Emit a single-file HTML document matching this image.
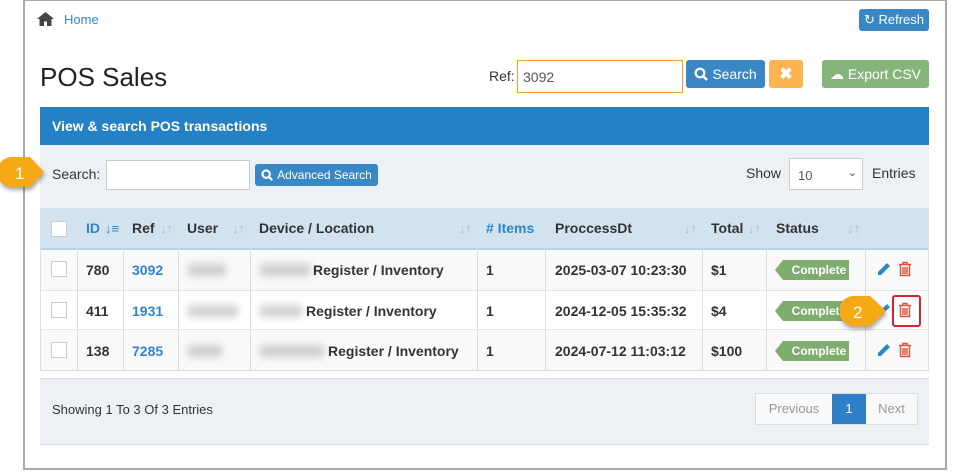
<!DOCTYPE html>
<html><head><style>
*{box-sizing:border-box;margin:0;padding:0}
body{width:953px;height:472px;background:#fff;font-family:"Liberation Sans",sans-serif;position:relative;overflow:hidden;color:#333}
.frame{position:absolute;left:23px;top:0;width:924px;height:470px;border:2px solid #a9a9a9;border-top:1px solid #a9a9a9}
.abs{position:absolute}
.btn{position:absolute;color:#fff;border-radius:3px;font-size:13px;display:flex;align-items:center;justify-content:center;gap:4px}
.th,.td{position:absolute;font-weight:bold;font-size:14px;display:flex;align-items:center}
.blur{position:absolute;background:#999;filter:blur(4px);opacity:.45;height:12px}
.badge{position:absolute;background:#7ead6f;color:#fff;font-size:12px;font-weight:bold;width:66px;height:20px;line-height:20px;text-align:center;padding-left:6px}
.badge:before{content:"";position:absolute;left:-8px;top:0;border-right:8px solid #7ead6f;border-top:10px solid transparent;border-bottom:10px solid transparent}
.cb{position:absolute;width:16px;height:16px;border:1px solid #ccc;background:#fff;left:51px}
.sort{color:#bbb;font-size:13px;position:absolute}
</style></head><body>
<div class="frame"></div>
<svg class="abs" style="left:37px;top:12px" width="17" height="14" viewBox="0 0 17 14"><path d="M8.5 0L0 7h2.5v7h4.5v-4.5h3V14h4.5V7H17z" fill="#444"/></svg>
<div class="abs" style="left:64px;top:12px;font-size:13px;color:#3a87c5">Home</div>
<div class="btn" style="left:859px;top:9px;width:70px;height:22px;background:#3a87c5">&#8635; Refresh</div>
<div class="abs" style="left:40px;top:62px;font-size:26px;color:#222">POS Sales</div>
<div class="abs" style="left:489px;top:68px;font-size:14px">Ref:</div>
<div class="abs" style="left:517px;top:60px;width:166px;height:33px;border:1px solid #f39a3e;font-size:14px;padding:8px 5px;color:#555">3092</div>
<div class="btn" style="left:686px;top:60px;width:79px;height:28px;background:#3a87c5;font-size:14px"><svg width="14" height="14" viewBox="0 0 14 14"><circle cx="6" cy="6" r="4.3" stroke="#fff" stroke-width="2.2" fill="none"/><path d="M9 9l4 4" stroke="#fff" stroke-width="2.5"/></svg>Search</div>
<div class="btn" style="left:769px;top:60px;width:34px;height:28px;background:#fbb450;font-size:16px;font-weight:bold">✖</div>
<div class="btn" style="left:822px;top:60px;width:107px;height:28px;background:#86b57c;font-size:14px">☁ Export CSV</div>
<div class="abs" style="left:40px;top:107px;width:889px;height:38px;background:#2481c6;color:#fff;font-weight:bold;font-size:14px;padding:11px 12px">View &amp; search POS transactions</div>
<div class="abs" style="left:40px;top:145px;width:889px;height:63px;background:#edf1f5"></div>
<div class="abs" style="left:52px;top:166px;font-size:14px">Search:</div>
<div class="abs" style="left:106px;top:160px;width:144px;height:30px;border:1px solid #ccc;background:#fff"></div>
<div class="btn" style="left:255px;top:164px;width:123px;height:22px;background:#3a87c5;font-size:12px"><svg width="12" height="12" viewBox="0 0 14 14"><circle cx="6" cy="6" r="4.3" stroke="#fff" stroke-width="2.4" fill="none"/><path d="M9 9l4 4" stroke="#fff" stroke-width="2.6"/></svg>Advanced Search</div>
<div class="abs" style="left:746px;top:165px;font-size:14px">Show</div>
<div class="abs" style="left:789px;top:158px;width:74px;height:32px;border:1px solid #ccc;background:#fff;font-size:13px;color:#555;padding:9px 8px">10<span style="position:absolute;right:5px;top:7px;font-size:11px">&#8964;</span></div>
<div class="abs" style="left:872px;top:165px;font-size:14px">Entries</div>
<div class="abs" style="left:40px;top:208px;width:889px;height:42px;background:#d0e3ef;border-bottom:2px solid #b9d3e6"></div>
<div class="abs" style="left:40px;top:250px;width:889px;height:40px;background:#f9f9f9"></div>
<div class="abs" style="left:40px;top:290px;width:889px;height:40px;background:#fff;border-top:1px solid #e4e4e4;border-bottom:1px solid #e4e4e4"></div>
<div class="abs" style="left:40px;top:330px;width:889px;height:41px;background:#f9f9f9;border-bottom:1px solid #ddd"></div>
<div class="abs" style="left:40px;top:208px;width:889px;height:163px;border-left:1px solid #ddd;border-right:1px solid #ddd"></div>
<div class="abs" style="left:77px;top:208px;width:1px;height:163px;background:#ddd"></div>
<div class="abs" style="left:123px;top:208px;width:1px;height:163px;background:#ddd"></div>
<div class="abs" style="left:178px;top:208px;width:1px;height:163px;background:#ddd"></div>
<div class="abs" style="left:250px;top:208px;width:1px;height:163px;background:#ddd"></div>
<div class="abs" style="left:477px;top:208px;width:1px;height:163px;background:#ddd"></div>
<div class="abs" style="left:545px;top:208px;width:1px;height:163px;background:#ddd"></div>
<div class="abs" style="left:702px;top:208px;width:1px;height:163px;background:#ddd"></div>
<div class="abs" style="left:766px;top:208px;width:1px;height:163px;background:#ddd"></div>
<div class="abs" style="left:865px;top:208px;width:1px;height:163px;background:#ddd"></div>
<div class="cb" style="top:221px"></div>
<div class="th" style="left:86px;top:220px;color:#2e86c8">ID <span style="font-size:13px;margin-left:5px">↓≡</span></div>
<div class="th" style="left:132px;top:220px">Ref</div><span class="sort" style="left:160px;top:221px">↓↑</span>
<div class="th" style="left:187px;top:220px">User</div><span class="sort" style="left:232px;top:221px">↓↑</span>
<div class="th" style="left:259px;top:220px">Device / Location</div><span class="sort" style="left:459px;top:221px">↓↑</span>
<div class="th" style="left:486px;top:220px;color:#2e86c8">#&nbsp;Items</div>
<div class="th" style="left:555px;top:220px">ProccessDt</div><span class="sort" style="left:684px;top:221px">↓↑</span>
<div class="th" style="left:711px;top:220px">Total</div><span class="sort" style="left:748px;top:221px">↓↑</span>
<div class="th" style="left:776px;top:220px">Status</div><span class="sort" style="left:847px;top:221px">↓↑</span>
<div class="cb" style="top:261px"></div><div class="cb" style="top:302px"></div><div class="cb" style="top:342px"></div>
<div class="td" style="left:86px;top:262px">780</div><div class="td" style="left:132px;top:262px;color:#2e86c8">3092</div>
<div class="td" style="left:86px;top:303px">411</div><div class="td" style="left:132px;top:303px;color:#2e86c8">1931</div>
<div class="td" style="left:86px;top:343px">138</div><div class="td" style="left:132px;top:343px;color:#2e86c8">7285</div>
<div class="blur" style="left:188px;top:264px;width:38px"></div>
<div class="blur" style="left:188px;top:305px;width:50px"></div>
<div class="blur" style="left:188px;top:345px;width:34px"></div>
<div class="blur" style="left:260px;top:264px;width:50px"></div>
<div class="blur" style="left:260px;top:305px;width:42px"></div>
<div class="blur" style="left:260px;top:345px;width:64px"></div>
<div class="td" style="left:313px;top:262px">Register / Inventory</div>
<div class="td" style="left:306px;top:303px">Register / Inventory</div>
<div class="td" style="left:328px;top:343px">Register / Inventory</div>
<div class="td" style="left:486px;top:262px">1</div><div class="td" style="left:486px;top:303px">1</div><div class="td" style="left:486px;top:343px">1</div>
<div class="td" style="left:555px;top:262px">2025-03-07 10:23:30</div>
<div class="td" style="left:555px;top:303px">2024-12-05 15:35:32</div>
<div class="td" style="left:555px;top:343px">2024-07-12 11:03:12</div>
<div class="td" style="left:711px;top:262px">$1</div><div class="td" style="left:711px;top:303px">$4</div><div class="td" style="left:711px;top:343px">$100</div>
<div class="badge" style="left:783px;top:260px">Complete</div>
<div class="badge" style="left:783px;top:301px">Complete</div>
<div class="badge" style="left:783px;top:341px">Complete</div>
<svg class="abs" style="left:876px;top:261px" width="16" height="16" viewBox="0 0 16 16"><path d="M2 11L11 2l3 3-9 9H2z" fill="#2e86c8"/></svg>
<svg class="abs" style="left:876px;top:302px" width="16" height="16" viewBox="0 0 16 16"><path d="M2 11L11 2l3 3-9 9H2z" fill="#2e86c8"/></svg>
<svg class="abs" style="left:876px;top:342px" width="16" height="16" viewBox="0 0 16 16"><path d="M2 11L11 2l3 3-9 9H2z" fill="#2e86c8"/></svg>
<svg class="abs" style="left:898px;top:261px" width="14" height="16" viewBox="0 0 14 16"><path d="M1 3.5h12M5 3V1.5h4V3M2.5 4v10.5h9V4M5 6v7M7 6v7M9 6v7" stroke="#e74c3c" stroke-width="1.4" fill="none"/></svg>
<svg class="abs" style="left:898px;top:302px" width="14" height="16" viewBox="0 0 14 16"><path d="M1 3.5h12M5 3V1.5h4V3M2.5 4v10.5h9V4M5 6v7M7 6v7M9 6v7" stroke="#e74c3c" stroke-width="1.4" fill="none"/></svg>
<svg class="abs" style="left:898px;top:342px" width="14" height="16" viewBox="0 0 14 16"><path d="M1 3.5h12M5 3V1.5h4V3M2.5 4v10.5h9V4M5 6v7M7 6v7M9 6v7" stroke="#e74c3c" stroke-width="1.4" fill="none"/></svg>
<div class="abs" style="left:892px;top:295px;width:29px;height:32px;border:2px solid #d9232a;border-radius:3px"></div>
<div class="abs" style="left:40px;top:378px;width:889px;height:67px;background:#edf1f5;border-top:1px solid #ddd;border-bottom:1px solid #ddd"></div>
<div class="abs" style="left:52px;top:402px;font-size:13px">Showing 1 To 3 Of 3 Entries</div>
<div class="abs" style="left:755px;top:393px;width:163px;height:32px;border:1px solid #ddd;background:#f9f9f9;display:flex;font-size:13px;color:#999">
<div style="width:76px;text-align:center;line-height:30px">Previous</div>
<div style="width:34px;background:#2e7fc8;color:#fff;text-align:center;line-height:30px">1</div>
<div style="flex:1;text-align:center;line-height:30px">Next</div></div>
<svg class="abs" style="left:0;top:155px;filter:drop-shadow(1px 3px 2px rgba(0,0,0,.35))" width="50" height="36"><path d="M12 2h18l14 15-14 15H12a15 15 0 0 1 0-30z" fill="#f5a915"/><text x="15" y="24" fill="#fff" font-size="17" font-family="Liberation Sans">1</text></svg>
<svg class="abs" style="left:840px;top:294px;filter:drop-shadow(1px 3px 2px rgba(0,0,0,.35))" width="52" height="36"><path d="M14 2h16l16 15-16 15H14a15 15 0 0 1 0-30z" fill="#f5a915"/><text x="13" y="24" fill="#fff" font-size="17" font-family="Liberation Sans">2</text></svg>
</body></html>
